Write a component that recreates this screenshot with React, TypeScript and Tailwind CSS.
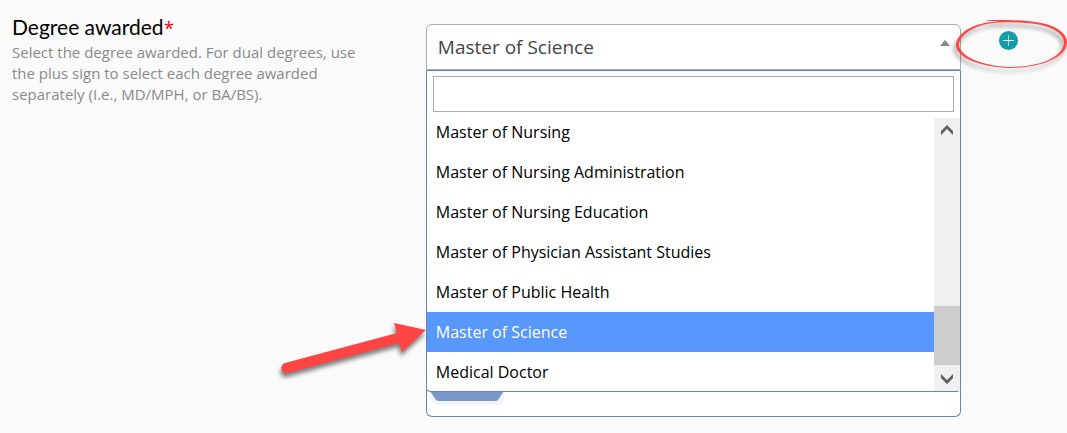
import { useState } from "react";
import clsx from "clsx";

const degrees = [
  "Master of Nursing",
  "Master of Nursing Administration",
  "Master of Nursing Education",
  "Master of Physician Assistant Studies",
  "Master of Public Health",
  "Master of Science",
  "Medical Doctor",
];

const ScrollBar = () => (
  <div
    aria-hidden="true"
    className="flex w-[26px] shrink-0 flex-col items-center bg-[#f0f0f0]"
  >
    <svg width="26" height="26" viewBox="0 0 26 26" fill="#606060">
      <path d="M13 7l6 6v4l-6-6-6 6v-4z" />
    </svg>
    <div className="flex-1" />
    <div className="h-[59px] w-full bg-[#cdcdcd]" />
    <svg width="26" height="26" viewBox="0 0 26 26" fill="#606060">
      <path d="M13 19l6-6V9l-6 6-6-6v4z" />
    </svg>
  </div>
);

const PointerArrow = () => (
  <svg
    aria-hidden="true"
    className="pointer-events-none absolute right-full bottom-0 overflow-visible"
    width="150"
    height="70"
    viewBox="0 0 150 70"
  >
    <g
      fill="#ff4444"
      style={{ filter: "drop-shadow(-1px 4px 2px rgb(0 0 0 / 0.5))" }}
    >
      <path d="M149 9L117 2l3 10L8 42a5 5 0 0 0 3 10l111-30 3 9z" />
    </g>
  </svg>
);

const HandDrawnCircle = () => (
  <svg
    aria-hidden="true"
    className="pointer-events-none absolute top-4 -left-1 overflow-visible"
    width="112"
    height="56"
    viewBox="0 0 112 56"
  >
    <path
      fill="#ff4444"
      fillRule="evenodd"
      style={{ filter: "drop-shadow(-2px 4px 2px rgb(0 0 0 / 0.4))" }}
      d="M30 4C55 3.500 77 4.500 92 9C103 13 110 19 110 26C110 42 82 52 53 52C25 51 1 43 -1 30C-1 17 17 6 42 5.500Q37 5 30 4.800zM42 6.500C21 7 2 18 2 29C3 41 26 50 53 51C81 51 106 42 107 27C107 18 97 12 84 9C72 6.500 57 6 42 6.500z"
    />
  </svg>
);

const App = () => {
  const [selected, setSelected] = useState("Master of Science");
  const [search, setSearch] = useState("");

  const visible = degrees.filter((degree) =>
    degree.toLowerCase().includes(search.toLowerCase()),
  );

  return (
    <main className="flex min-h-screen items-start bg-[#fafafa] font-['Open_Sans',sans-serif]">
      <div className="-mr-px w-2/5 pt-3 pr-16 pl-3">
        <h2
          id="degree-label"
          className="font-['Lato',sans-serif] text-[21px] leading-[30px] text-black"
        >
          Degree awarded
          <span className="font-['Open_Sans',sans-serif] text-[19px] leading-none text-[#ff0000]">
            *
          </span>
        </h2>
        <p id="degree-help" className="text-[15px] leading-[21px] text-[#8a8a8a]">
          Select the degree awarded. For dual degrees, use the plus sign to
          select each degree awarded separately (I.e., MD/MPH, or BA/BS).
        </p>
      </div>

      <div className="min-w-0 flex-1 pt-6">
        <button
          type="button"
          role="combobox"
          aria-expanded="true"
          aria-controls="degree-list"
          aria-labelledby="degree-label"
          aria-describedby="degree-help"
          className="flex h-[46px] w-full items-center justify-between rounded-t-md border border-[#aaa] bg-white pr-2.5 pl-[11px] text-[19px] text-[#444]"
        >
          {selected}
          <svg width="10" height="6" viewBox="0 0 10 6" className="mb-2">
            <path d="M5 0l5 6H0z" fill="#888" />
          </svg>
        </button>

        {/* ===== OPEN LIST ===== */}
        <div className="relative z-10 rounded-b border border-[#5f86bd] bg-white">
          <div className="px-1.5 py-[5px]">
            <input
              type="text"
              aria-label="Search degrees"
              value={search}
              onChange={(e) => setSearch(e.target.value)}
              className="block h-9 w-full border border-[#aaa] px-2 outline-none"
            />
          </div>
          <div className="mt-px flex h-[273px] overflow-hidden">
            <ul
              id="degree-list"
              role="listbox"
              aria-labelledby="degree-label"
              className="-mt-1.5 flex-1"
            >
              {visible.map((degree) => (
                <li
                  key={degree}
                  role="option"
                  aria-selected={degree === selected}
                  onClick={() => setSelected(degree)}
                  className={clsx(
                    "cursor-pointer px-[9px] text-base leading-10",
                    degree === selected
                      ? "bg-[#5897fb] text-white"
                      : "text-black",
                  )}
                >
                  {degree}
                </li>
              ))}
            </ul>
            <ScrollBar />
          </div>
          <PointerArrow />
        </div>

        {/* ===== FIELD BEHIND THE LIST ===== */}
        <div className="-mt-1 h-[29px] rounded-b-md border border-t-0 border-[#5f86bd] bg-white px-[3px] pt-[3px]">
          <svg width="74" height="15" viewBox="0 0 74 15" aria-hidden="true">
            <path d="M0 0h74v10l-5 4H7l-7-5z" fill="#f1f4fa" />
            <path d="M0 0h74l-6 9q-1 1-3 1H9q-2 0-3-1z" fill="#7b99c8" />
          </svg>
        </div>
      </div>

      <div className="relative w-[106px] shrink-0 pt-[31px] pl-[38px]">
        <button
          type="button"
          aria-label="Add another degree"
          className="block size-[19px] rounded-full bg-[#139dab]"
        >
          <svg width="19" height="19" viewBox="0 0 19 19" stroke="#fff">
            <path d="M4 9.500h11" />
            <path d="M9.500 4v11" strokeOpacity="0.6" />
          </svg>
        </button>
        <HandDrawnCircle />
      </div>
    </main>
  );
};

export default App;
